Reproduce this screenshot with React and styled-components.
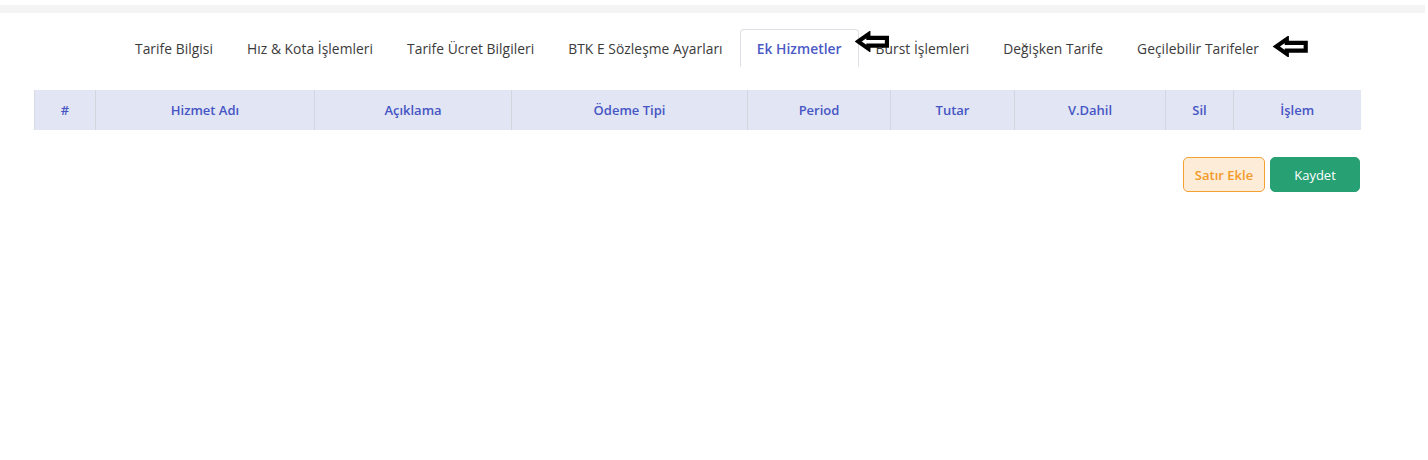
import React from "react";
import styled, { createGlobalStyle } from "styled-components";

const GlobalStyle = createGlobalStyle`
  html, body { margin: 0; padding: 0; background: #ffffff; }
  body { font-family: "Open Sans", "Liberation Sans", sans-serif; }
  * { box-sizing: border-box; }
`;

const Page = styled.div`
  position: relative;
  width: 1428px;
  height: 460px;
  background: #fff;
  padding-top: 5px;
`;

const TopStrip = styled.div`
  height: 8px;
  margin-right: 3px;
  background: #f4f4f4;
`;

const Content = styled.div`
  margin-left: 34px;
  width: 1326px;
  padding-top: 16px;
`;

const TabNav = styled.div`
  display: flex;
  justify-content: center;
`;

const TabList = styled.ul`
  display: flex;
  list-style: none;
  margin: 0;
  padding: 0;
  border-bottom: 1px solid #dcdfe3;
`;

const Tab = styled.li`
  height: 38px;
  padding: 0 16px;
  display: flex;
  align-items: center;
  font-size: 13.8px;
  letter-spacing: 0.05px;
  margin-bottom: -1px;
  color: ${(p) => (p.$active ? "#4b5ac6" : "#3b3b3b")};
  font-weight: ${(p) => (p.$active ? 600 : 400)};
  background: #fff;
  border: 1px solid ${(p) => (p.$active ? "#dcdfe3" : "transparent")};
  border-bottom-color: ${(p) => (p.$active ? "#fff" : "transparent")};
  border-radius: 4px 4px 0 0;
  white-space: nowrap;
`;

const Table = styled.table`
  margin-top: 23px;
  width: 1326px;
  border-collapse: collapse;
  table-layout: fixed;
`;

const Th = styled.th`
  height: 40px;
  background: #e2e5f4;
  color: #4656c4;
  font-size: 13px;
  font-weight: 550;
  text-align: center;
  border-left: 1px solid #d3d6df;
  padding: 0;
  &:first-child { border-left: 1px solid #d8dbe3; }
`;

const Actions = styled.div`
  display: flex;
  justify-content: flex-end;
  gap: 5px;
  margin-top: 27px;
`;

const Button = styled.button`
  height: 35px;
  padding: 0;
  border-radius: 5px;
  font-family: inherit;
  font-size: 13px;
  font-weight: ${(p) => (p.$variant === "save" ? 500 : 600)};
  white-space: nowrap;
  cursor: pointer;
  border: 1px solid ${(p) => (p.$variant === "save" ? "#27a073" : "#f5a033")};
  background: ${(p) => (p.$variant === "save" ? "#27a073" : "#fdecd8")};
  color: ${(p) => (p.$variant === "save" ? "#ffffff" : "#f39a2a")};
  width: ${(p) => (p.$variant === "save" ? "90px" : "82px")};
`;

const Arrow = styled.svg`
  position: absolute;
  left: ${(p) => p.$x}px;
  top: ${(p) => p.$y}px;
`;

const ArrowIcon = ({ x, y, w, h }) => (
  <Arrow $x={x} $y={y} width={w} height={h} viewBox="0 0 34 20">
    <path
      d="M3 10 L13 3 L13 6.5 L31 6.5 L31 14 L13 14 L13 17 Z"
      fill="#fff"
      stroke="#000"
      strokeWidth="4"
      strokeLinejoin="miter"
    />
  </Arrow>
);

const tabs = [
  "Tarife Bilgisi",
  "Hız & Kota İşlemleri",
  "Tarife Ücret Bilgileri",
  "BTK E Sözleşme Ayarları",
  "Ek Hizmetler",
  "Burst İşlemleri",
  "Değişken Tarife",
  "Geçilebilir Tarifeler",
];

const columns = [
  ["#", 61],
  ["Hizmet Adı", 219],
  ["Açıklama", 197],
  ["Ödeme Tipi", 236],
  ["Period", 143],
  ["Tutar", 124],
  ["V.Dahil", 151],
  ["Sil", 68],
  ["İşlem", 127],
];

export default function App() {
  return (
    <Page>
      <GlobalStyle />
      <TopStrip />
      <Content>
        <TabNav>
          <TabList>
            {tabs.map((t) => (
              <Tab key={t} $active={t === "Ek Hizmetler"}>
                {t}
              </Tab>
            ))}
          </TabList>
        </TabNav>
        <Table>
          <colgroup>
            {columns.map(([c, w]) => (
              <col key={c} style={{ width: w }} />
            ))}
          </colgroup>
          <thead>
            <tr>
              {columns.map(([c]) => (
                <Th key={c}>{c}</Th>
              ))}
            </tr>
          </thead>
        </Table>
        <Actions>
          <Button>Satır Ekle</Button>
          <Button $variant="save">Kaydet</Button>
        </Actions>
      </Content>
      <ArrowIcon x={855} y={31} w={35} h={21} />
      <ArrowIcon x={1272} y={36} w={38} h={21} />
    </Page>
  );
}
